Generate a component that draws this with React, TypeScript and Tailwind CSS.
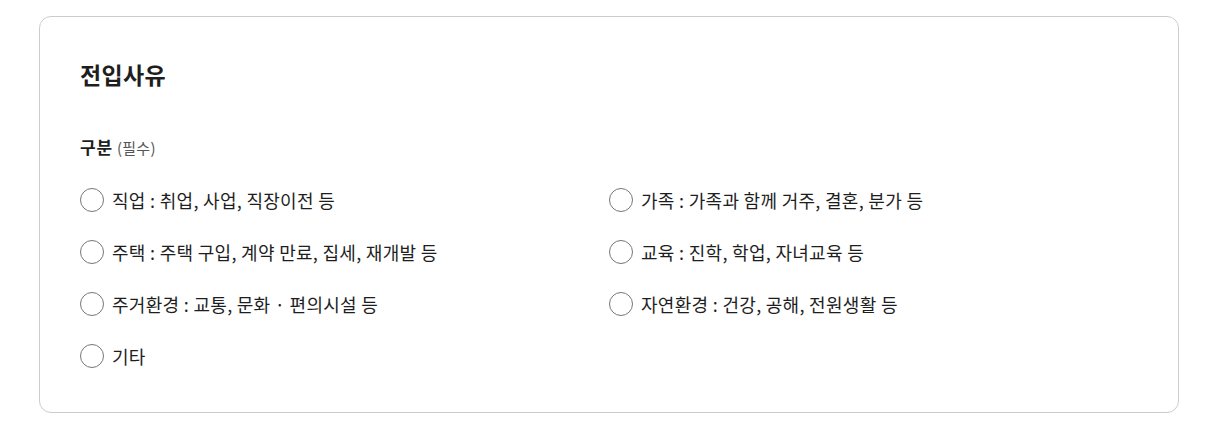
const FONT = "font-['Noto_Sans_CJK_KR','Noto_Sans',sans-serif]";

const OPTIONS = [
  '직업 : 취업, 사업, 직장이전 등',
  '가족 : 가족과 함께 거주, 결혼, 분가 등',
  '주택 : 주택 구입, 계약 만료, 집세, 재개발 등',
  '교육 : 진학, 학업, 자녀교육 등',
  '주거환경 : 교통, 문화 · 편의시설 등',
  '자연환경 : 건강, 공해, 전원생활 등',
  '기타',
];

function Radio({ label }: { label: string }) {
  return (
    <label className="flex items-center gap-2 h-6 cursor-pointer">
      <span className="w-6 h-6 rounded-full border-[1.5px] border-[#777] bg-white shrink-0" />
      <span className="text-[18px] leading-6 tracking-[0.3px] text-[#1e1e1e]">{label}</span>
    </label>
  );
}

export default function App() {
  return (
    <div className={`${FONT} bg-white min-h-[441px] pt-4 pl-[39px]`}>
      <section className="w-[1140px] border border-[#cccccc] rounded-xl px-10 pt-[41px] pb-[44px]">
        <h2 className="text-[23px] leading-8 font-bold tracking-[0.3px] text-[#1e1e1e]">전입사유</h2>
        <div className="mt-[45px] flex items-baseline gap-1 leading-6">
          <span className="text-[17px] font-bold tracking-[0.8px] text-[#1e1e1e]">구분</span>
          <span className="text-[15px] tracking-[0.3px] text-[#555]">(필수)</span>
        </div>
        <div className="mt-7 grid grid-cols-2 gap-y-7">
          {OPTIONS.map((o) => (
            <Radio key={o} label={o} />
          ))}
        </div>
      </section>
    </div>
  );
}
